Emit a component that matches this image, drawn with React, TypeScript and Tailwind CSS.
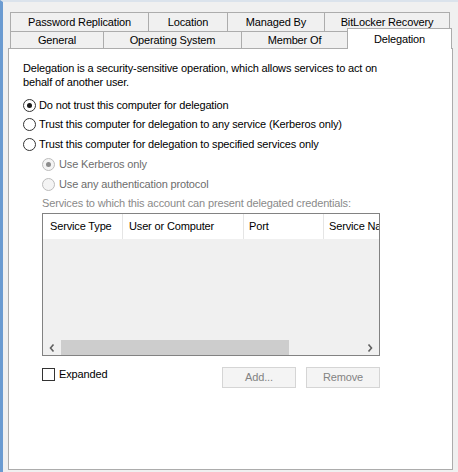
import React from "react";

const ROW1 = [
  { label: "Password Replication", w: "w-[138px]" },
  { label: "Location", w: "w-[79px]" },
  { label: "Managed By", w: "w-[97px]" },
  { label: "BitLocker Recovery", w: "w-[126px]" },
];

const ROW2 = [
  { label: "General", w: "w-[93px]" },
  { label: "Operating System", w: "w-[138px]" },
  { label: "Member Of", w: "w-[106px]" },
];

function Radio({ checked, disabled }: { checked?: boolean; disabled?: boolean }) {
  return (
    <span
      className={
        "grid h-[13px] w-[13px] shrink-0 place-items-center rounded-full border " +
        (disabled ? "border-[#bcbcbc] bg-[#f4f4f4]" : "border-[#333333] bg-white")
      }
    >
      {checked && (
        <span className={"h-[5px] w-[5px] rounded-full " + (disabled ? "bg-[#8c8c8c]" : "bg-[#1a1a1a]")} />
      )}
    </span>
  );
}

export default function App() {
  return (
    <div className="relative h-[472px] w-[458px] overflow-hidden border-l-[3px] border-t-[2px] border-l-[#6b9bd1] border-t-[#dbe3ec] bg-[#f0f0f0] font-['Liberation_Sans',sans-serif] text-[11px] tracking-[-0.15px] text-black">
      <div className="pl-[7px] pt-[10px]">
        {/* tab row 1 */}
        <div className="flex h-[19px]">
          {ROW1.map((t, i) => (
            <div
              key={t.label}
              className={
                t.w +
                " flex items-center justify-center border-l border-t border-[#acacac] bg-[#f0f0f0] pt-px " +
                (i === ROW1.length - 1 ? "border-r" : "")
              }
            >
              {t.label}
            </div>
          ))}
        </div>
        {/* tab row 2 */}
        <div className="flex h-[17px] items-end">
          {ROW2.map((t) => (
            <div
              key={t.label}
              className={t.w + " flex h-[17px] items-center justify-center border-l border-t border-[#acacac] bg-[#f0f0f0]"}
            >
              {t.label}
            </div>
          ))}
          <div className="relative z-10 -mb-px flex h-[21px] w-[105px] items-start justify-center border-x border-t border-[#acacac] bg-white pt-[2px]">
            Delegation
          </div>
        </div>
      </div>

      {/* panel */}
      <div className="ml-[5px] h-[422px] w-[445px] border border-[#acacac] bg-white px-[14px] pt-[12px]">
        <p className="leading-[14px]">
          Delegation is a security-sensitive operation, which allows services to act on
          <br />
          behalf of another user.
        </p>

        <div className="mt-[6px]">
          <div className="flex h-[20px] items-center gap-[3px]">
            <Radio checked />
            <span>Do not trust this computer for delegation</span>
          </div>
          <div className="flex h-[19px] items-center gap-[3px]">
            <Radio />
            <span>Trust this computer for delegation to any service (Kerberos only)</span>
          </div>
          <div className="flex h-[20px] items-center gap-[3px]">
            <Radio />
            <span>Trust this computer for delegation to specified services only</span>
          </div>
        </div>

        <div className="pl-[19px] pt-px text-[#6d6d6d]">
          <div className="flex h-[19px] items-center gap-[4px]">
            <Radio checked disabled />
            <span>Use Kerberos only</span>
          </div>
          <div className="flex h-[20px] items-center gap-[4px]">
            <Radio disabled />
            <span>Use any authentication protocol</span>
          </div>
          <div className="flex h-[19px] items-center text-[#8a8a8a]">
            Services to which this account can present delegated credentials:
          </div>

          {/* list view */}
          <div className="flex h-[143px] w-[338px] flex-col border border-[#828282] bg-[#f0f0f0] text-black">
            <div className="flex h-[25px] shrink-0 bg-white">
              <div className="flex w-[80px] items-center border-r border-[#e5e5e5] pl-[7px]">Service Type</div>
              <div className="flex w-[121px] items-center border-r border-[#e5e5e5] pl-[6px]">User or Computer</div>
              <div className="flex w-[80px] items-center border-r border-[#e5e5e5] pl-[5px]">Port</div>
              <div className="flex min-w-0 flex-1 items-center overflow-hidden whitespace-nowrap pl-[5px]">Service Name</div>
            </div>
            <div className="flex-1" />
            <div className="flex h-[15px] shrink-0 items-center">
              <div className="flex w-[18px] justify-center">
                <svg width="6" height="8" viewBox="0 0 6 8">
                  <path d="M4.5 0.5 L1.5 4 L4.5 7.5" fill="none" stroke="#606060" strokeWidth="1.6" />
                </svg>
              </div>
              <div className="h-[15px] w-[228px] bg-[#cdcdcd]" />
              <div className="flex-1" />
              <div className="flex w-[18px] justify-center">
                <svg width="6" height="8" viewBox="0 0 6 8">
                  <path d="M1.5 0.5 L4.5 4 L1.5 7.5" fill="none" stroke="#606060" strokeWidth="1.6" />
                </svg>
              </div>
            </div>
          </div>

          <div className="mt-[11px] flex w-[338px] items-start">
            <div className="flex h-[13px] items-center gap-[4px] pt-[1px] text-black">
              <span className="h-[13px] w-[13px] border border-[#333333] bg-white" />
              <span>Expanded</span>
            </div>
            <div className="flex-1" />
            <button className="flex h-[21px] w-[74px] items-center justify-center border border-[#d5d5d5] bg-[#f4f4f4] text-[#838383]">
              Add...
            </button>
            <button className="ml-[10px] flex h-[21px] w-[74px] items-center justify-center border border-[#d5d5d5] bg-[#f4f4f4] text-[#838383]">
              Remove
            </button>
          </div>
        </div>
      </div>
    </div>
  );
}
